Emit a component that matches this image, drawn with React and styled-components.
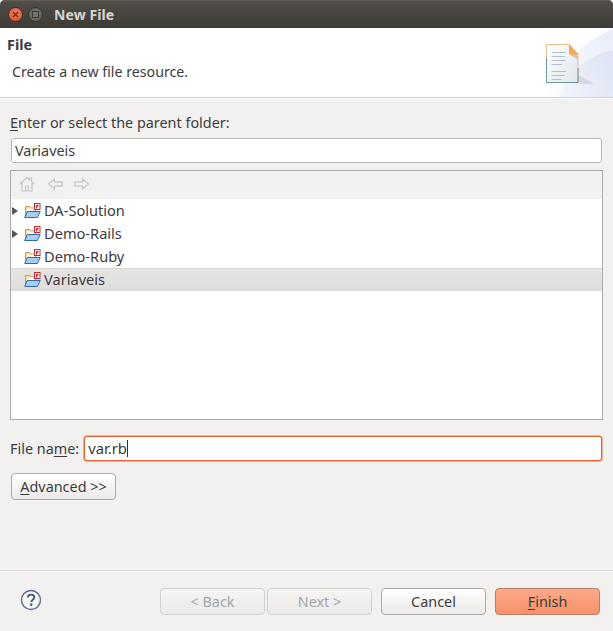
import React from 'react'
import styled, { createGlobalStyle } from 'styled-components'

const GlobalStyle = createGlobalStyle`
  html, body {
    margin: 0;
    padding: 0;
    background: #f2f1f0;
  }
  * {
    box-sizing: border-box;
  }
`

const Window = styled.div`
  width: 613px;
  height: 631px;
  display: flex;
  flex-direction: column;
  overflow: hidden;
  background: #f2f1f0;
  color: #3c3c3c;
  font-family: 'Noto Sans', 'Open Sans', sans-serif;
  font-size: 14.4px;
`

const TitleBar = styled.div`
  height: 28px;
  flex: none;
  display: flex;
  align-items: center;
  padding: 0 0 0 8px;
  background: linear-gradient(#514e47, #3d3b36);
  border-radius: 5px 5px 0 0;
  box-shadow: inset 0 1px 0 #625f58;
`

const WindowDot = styled.div`
  width: 15px;
  height: 15px;
  margin-right: 5px;
  border-radius: 50%;
  display: flex;
  align-items: center;
  justify-content: center;
  background: ${(p) => (p.$close ? 'radial-gradient(circle at 50% 40%, #f5835a, #dc4a1e)' : 'radial-gradient(circle at 50% 40%, #77756f, #5c5a55)')};
  border: 1px solid #35332f;
`

const WindowTitle = styled.div`
  margin-left: 6px;
  color: #d8d4cb;
  font-size: 14px;
  font-weight: 700;
  letter-spacing: 0.1px;
`

const Banner = styled.div`
  position: relative;
  height: 70px;
  flex: none;
  background: #fff;
  border-bottom: 1px solid #d4d3d1;
  box-shadow: 0 1px 0 #fff;
`

const BannerTitle = styled.div`
  padding: 7px 0 0 7px;
  font-size: 14.4px;
  line-height: 20px;
  font-weight: 700;
`

const BannerText = styled.div`
  padding: 7px 0 0 12px;
  font-size: 14.2px;
  line-height: 20px;
`

const BannerArt = styled.svg`
  position: absolute;
  right: 0;
  top: 0;
`

const Body = styled.div`
  flex: 1;
  display: flex;
  flex-direction: column;
  padding: 15px 10px 0;
`

const FieldLabel = styled.div`
  line-height: 20px;
`

const Key = styled.span`
  text-decoration: underline;
  text-underline-offset: 2px;
`

const TextField = styled.div`
  height: 25px;
  display: flex;
  align-items: center;
  padding: 0 3px 1px;
  background: #fff;
  border: 1px solid ${(p) => (p.$focused ? '#e8602f' : '#b9b7b2')};
  border-radius: 3px;
  ${(p) => p.$focused && 'box-shadow: 0 0 0 0.6px #ee8059;'}
`

const ParentField = styled(TextField)`
  margin: 5px 1px 0;
`

const Caret = styled.span`
  width: 1px;
  height: 17px;
  background: #333;
`

const TreeBox = styled.div`
  height: 250px;
  margin-top: 7px;
  border: 1px solid #aeaca8;
  background: #fff;
  display: flex;
  flex-direction: column;
`

const TreeToolbar = styled.div`
  height: 28px;
  flex: none;
  display: flex;
  align-items: center;
  gap: 7.5px;
  padding: 0 0 2px 6px;
  background: #f2f1f0;
`

const TreeRow = styled.div`
  height: 23px;
  display: flex;
  align-items: center;
  padding-left: 1px;
  line-height: 23px;
  background: ${(p) => (p.$selected ? 'linear-gradient(#e6e5e3, #dedddb)' : 'transparent')};
  ${(p) => p.$selected && 'box-shadow: inset 0 1px 0 #d8d7d4;'}
`

const RowLabel = styled.span`
  margin-left: 3px;
  font-size: 14.6px;
`

const Arrow = styled.span`
  width: 0;
  height: 0;
  flex: none;
  margin-right: 6px;
  border-style: solid;
  border-width: 4px 0 4px 6px;
  border-color: transparent transparent transparent ${(p) => (p.$hidden ? 'transparent' : '#55554f')};
`

const FolderSvg = styled.svg`
  flex: none;
`

const NameRow = styled.div`
  display: flex;
  align-items: center;
  gap: 5px;
  margin-top: 16px;
  padding-right: 1px;
`

const NameField = styled(TextField)`
  flex: 1;
  font-size: 14.8px;
`

const Button = styled.button`
  height: 27px;
  width: ${(p) => p.$width || 105}px;
  padding: 0;
  border-radius: 4px;
  border: 1px solid ${(p) => (p.$primary ? '#b67f69' : p.$disabled ? '#d3d1cd' : '#aeaba6')};
  background: ${(p) => (p.$primary ? 'linear-gradient(#fba98a, #f79169)' : p.$disabled ? 'linear-gradient(#f6f5f4, #ebeae8)' : 'linear-gradient(#fff, #eceae8)')};
  color: ${(p) => (p.$disabled ? '#a3a6ab' : '#3c3c3c')};
  font-family: inherit;
  font-size: 14.4px;
  line-height: 20px;
`

const AdvancedButton = styled(Button)`
  margin: 12px 0 0 1px;
`

const Footer = styled.div`
  height: 61px;
  flex: none;
  display: flex;
  align-items: flex-start;
  padding: 18px 13px 0 20px;
  border-top: 1px solid #dcdad6;
  box-shadow: inset 0 1px 0 #f8f7f6;
`

const FooterButtons = styled.div`
  margin-left: auto;
  margin-top: -1px;
  display: flex;
  gap: 2px;
`

const GapButton = styled(Button)`
  margin-left: 7px;
`

const HelpIcon = () => (
  <svg width="22" height="22" viewBox="0 0 22 22">
    <circle cx="11" cy="11" r="9.5" fill="#f6f6f6" stroke="#5a6d8f" strokeWidth="1.4" />
    <path d="M7.8 8.6c0-2 1.5-3 3.3-3s3.2 1 3.2 2.700c0 2.400-3 2.400-3 4.600" fill="none" stroke="#45587a" strokeWidth="1.9" />
    <circle cx="11.2" cy="15.6" r="1.3" fill="#45587a" />
  </svg>
)

const FolderIcon = () => (
  <FolderSvg width="17" height="16" viewBox="0 0 17 16">
    <path d="M1.500 14V3.500h4l1 1.500h5v9z" fill="#f9dfa0" stroke="#cf9a45" strokeWidth="1" />
    <path d="M3.500 5.500h7v3h-7z" fill="#fff" />
    <path d="M.7 14.500l2.600-6h12.900l-2.800 6z" fill="#a9ccf2" stroke="#2f6bab" strokeWidth="1" />
    <rect x="10.500" y="0.500" width="5.500" height="6" fill="#fff" stroke="#c4272d" strokeWidth="1" />
    <rect x="12" y="2" width="1.300" height="3.500" fill="#c4272d" />
    <rect x="13" y="2" width="1.500" height="1.500" fill="#c4272d" />
  </FolderSvg>
)

const ToolIcon = ({ children }) => (
  <svg width="20" height="18" viewBox="0 0 20 18" fill="none" stroke="#c6c5c2" strokeWidth="1.2">
    {children}
  </svg>
)

const BannerDrawing = () => (
  <BannerArt width="75" height="69" viewBox="0 0 75 69">
    <defs>
      <linearGradient id="wash" x1="0" y1="1" x2="1" y2="0">
        <stop offset="0" stopColor="#ffffff" />
        <stop offset="1" stopColor="#e9edf8" />
      </linearGradient>
      <linearGradient id="wash2" x1="0" y1="1" x2="1" y2="0.4">
        <stop offset="0" stopColor="#f3f5fb" />
        <stop offset="1" stopColor="#dfe5f5" />
      </linearGradient>
      <linearGradient id="page" x1="0" y1="0" x2="1" y2="1">
        <stop offset="0" stopColor="#ffffff" />
        <stop offset="1" stopColor="#e0e6ec" />
      </linearGradient>
    </defs>
    <path d="M3 69C22 40 45 12 75 1V69z" fill="url(#wash)" />
    <path d="M36 42C48 32 60 26 75 22V69H20z" fill="url(#wash2)" />
    <path d="M40 47l16 9-16 0z" fill="#c9c6d4" opacity="0.55" />
    <path d="M8.500 16.500H31L40 26V54.500H8.500z" fill="url(#page)" stroke="#e9bf87" strokeWidth="1" />
    <path d="M8.500 30V54.500H40V40" fill="none" stroke="#6f9a98" strokeWidth="1" />
    <path d="M31 16l9 10-3 2-6-2z" fill="#f0a955" />
    <path d="M32 27l8 0v5z" fill="#c8ccd2" />
    <path d="M13.500 24.500H28M13.500 28.500H27M13.500 32.500H28M13.500 36.500H24M13.500 43.500H28M13.500 47.500H27M13.500 51.500H24" stroke="#b4bfd6" strokeWidth="1" />
  </BannerArt>
)

const projects = [
  { name: 'DA-Solution', arrow: true },
  { name: 'Demo-Rails', arrow: true },
  { name: 'Demo-Ruby' },
  { name: 'Variaveis', selected: true },
]

export default function App() {
  return (
    <Window>
      <GlobalStyle />
      <TitleBar>
        <WindowDot $close>
          <svg width="7" height="7" viewBox="0 0 7 7">
            <path d="M1 1l5 5M6 1L1 6" stroke="#5a2410" strokeWidth="1.2" />
          </svg>
        </WindowDot>
        <WindowDot>
          <svg width="7" height="7" viewBox="0 0 7 7">
            <rect x="0.500" y="0.500" width="6" height="6" fill="none" stroke="#3b3a36" strokeWidth="1" />
          </svg>
        </WindowDot>
        <WindowTitle>New File</WindowTitle>
      </TitleBar>

      <Banner>
        <BannerTitle>File</BannerTitle>
        <BannerText>Create a new file resource.</BannerText>
        <BannerDrawing />
      </Banner>

      <Body>
        <FieldLabel>
          <Key>E</Key>nter or select the parent folder:
        </FieldLabel>
        <ParentField>Variaveis</ParentField>

        <TreeBox>
          <TreeToolbar>
            <ToolIcon>
              <path d="M3 9l7-6.500 2.500 2.300V3h2v3.600L17 9M5 8v8h10V8M8.500 16v-5h3v5" />
            </ToolIcon>
            <ToolIcon>
              <path d="M3.500 9l6-5v2.800H17v4.400H9.500V14z" />
            </ToolIcon>
            <ToolIcon>
              <path d="M16.500 9l-6-5v2.800H3v4.400h7.500V14z" />
            </ToolIcon>
          </TreeToolbar>
          {projects.map((project) => (
            <TreeRow key={project.name} $selected={project.selected}>
              <Arrow $hidden={!project.arrow} />
              <FolderIcon />
              <RowLabel>{project.name}</RowLabel>
            </TreeRow>
          ))}
        </TreeBox>

        <NameRow>
          <FieldLabel>
            File na<Key>m</Key>e:
          </FieldLabel>
          <NameField $focused>
            var.rb
            <Caret />
          </NameField>
        </NameRow>

        <div>
          <AdvancedButton $width={105}>
            <Key>A</Key>dvanced &gt;&gt;
          </AdvancedButton>
        </div>
      </Body>

      <Footer>
        <HelpIcon />
        <FooterButtons>
          <Button $disabled disabled>
            &lt; Back
          </Button>
          <Button $disabled disabled>
            Next &gt;
          </Button>
          <GapButton>Cancel</GapButton>
          <GapButton $primary>
            <Key>F</Key>inish
          </GapButton>
        </FooterButtons>
      </Footer>
    </Window>
  )
}
